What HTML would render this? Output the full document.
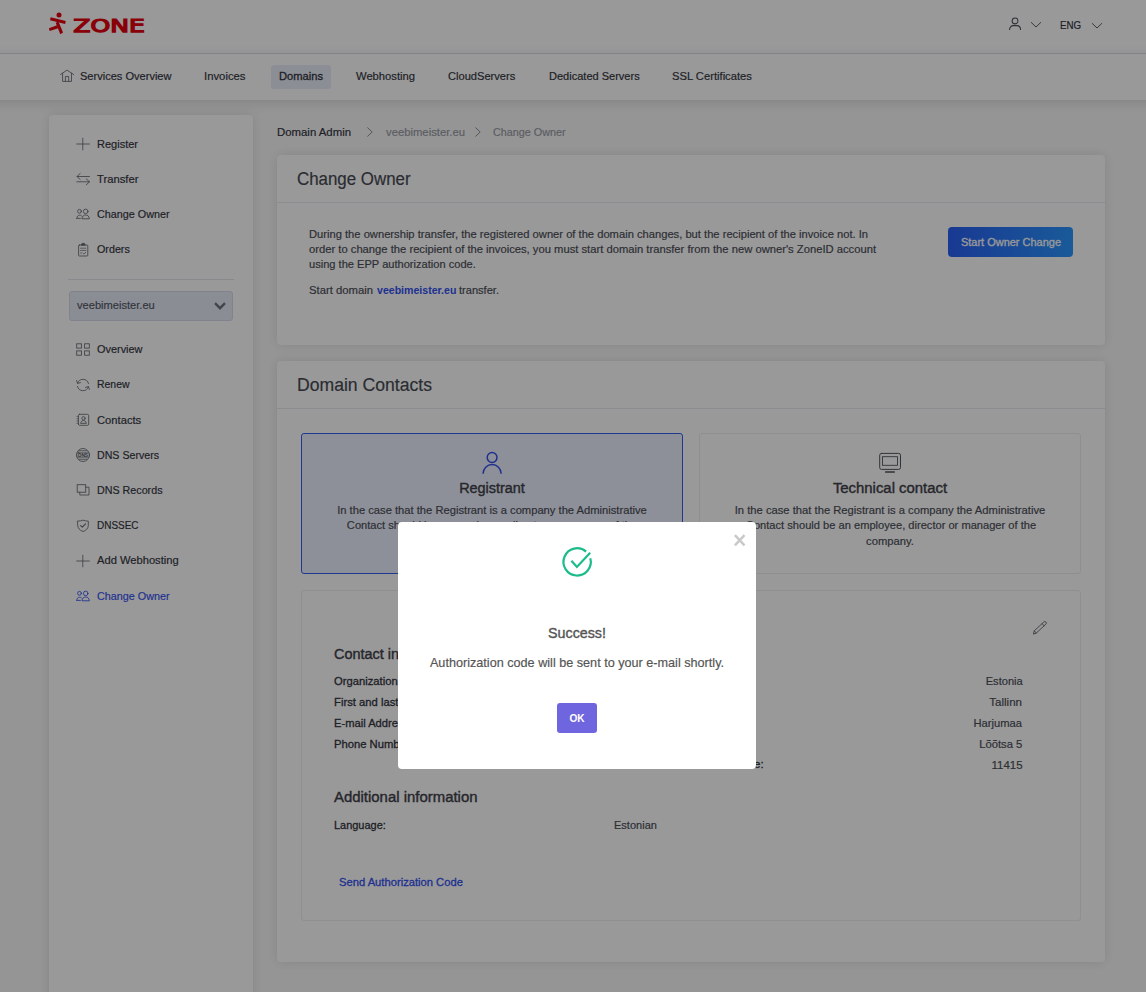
<!DOCTYPE html>
<html lang="en"><head><meta charset="utf-8"><title>Change Owner</title>
<style>
*{box-sizing:border-box;margin:0;padding:0}
html,body{width:1146px;height:992px;overflow:hidden}
body{font-family:"Liberation Sans",sans-serif;font-size:12px;color:#33363f;background:#f9f9fa;position:relative}
.abs{position:absolute}
.t{position:absolute;white-space:nowrap}
.t b{font-weight:700}
header{position:absolute;left:0;top:0;width:1146px;height:54px;background:#fff;border-bottom:1px solid #e2e4ea}
nav{position:absolute;left:-30px;top:54px;width:1206px;height:46px;background:#fff;box-shadow:0 3px 12px rgba(0,0,0,.12)}
.pill{position:absolute;left:271px;top:65px;width:60px;height:24px;background:#e9edf9;border-radius:3px}
.side{position:absolute;left:49px;top:115px;width:204px;height:900px;background:#fff;border-radius:4px;box-shadow:0 0 12px rgba(0,0,0,.11)}
.card{position:absolute;left:277px;width:828px;background:#fff;border-radius:4px;box-shadow:0 0 12px rgba(0,0,0,.11)}
.hr{position:absolute;left:277px;width:828px;height:1px;background:#e8eaef}
svg{position:absolute;overflow:visible}
.ic{fill:none;stroke:#666a73;stroke-width:.85;stroke-linecap:round;stroke-linejoin:round}
.overlay{position:absolute;left:0;top:0;width:1146px;height:992px;background:rgba(0,0,0,.4)}
.modal{position:absolute;left:398px;top:522px;width:358px;height:247px;background:#fff;border-radius:4px}
</style></head><body>

<header></header>
<nav></nav>
<div class="pill"></div>
<div class="side"></div>
<div class="card" style="top:155px;height:190px"></div>
<div class="hr" style="top:202px"></div>
<div class="card" style="top:361px;height:601px"></div>
<div class="hr" style="top:408px"></div>

<!-- logo -->
<svg style="left:0;top:0" width="160" height="54" viewBox="0 0 160 54">
 <g fill="#e4000f">
  <circle cx="59" cy="15.100" r="2.500"/>
  <path d="M50.700 17.200 L65.800 21 L65.100 24 L50 20.200 Z"/>
  <path d="M55.700 22.700 L58.500 21.600 L63 32.500 L60.300 34.200 Z"/>
  <path d="M57 25.300 L58.200 28.200 L49.700 31 L48.900 28.200 Z"/>
 </g>
 <text x="73.300" y="32.300" font-family="DejaVu Sans, Liberation Sans, sans-serif" font-size="17.4" fill="#e4000f" stroke="#e4000f" stroke-width="1.25" stroke-linejoin="miter" textLength="71.5" lengthAdjust="spacingAndGlyphs">ZONE</text>
</svg>

<!-- header right icons -->
<svg class="ic" style="left:1009px;top:18px;stroke:#50535c;stroke-width:1.050;stroke-linecap:butt" width="12" height="12" viewBox="0 0 12 12"><circle cx="6.050" cy="2.950" r="2.900"/><path d="M0.500 12.100C0.500 9.300 2.200 7.600 4.300 7.600H7.800C9.900 7.600 11.600 9.300 11.600 12.100"/></svg>
<svg class="ic" style="left:1031px;top:21px;stroke:#3f424a" width="10" height="6" viewBox="0 0 10 6"><path d="M0.300 1.500L5 6 9.700 1.500"/></svg>
<svg class="ic" style="left:1092px;top:22.200px;stroke:#3f424a" width="10" height="6" viewBox="0 0 10 6"><path d="M0.300 1.500L5 6 9.700 1.500"/></svg>

<!-- nav home icon -->
<svg class="ic" style="left:60px;top:69px" width="14" height="14" viewBox="0 0 14 14"><path d="M0.500 5.500L7.050 1.100 13.600 5.500"/><path d="M2.600 4.300V12.400H11.500V4.300"/><path d="M5.400 12.400V7.500H8.700V12.400"/></svg>

<!-- sidebar -->
<div class="abs" style="left:68px;top:279px;width:166px;height:1px;background:#e2e4ea"></div>
<div class="abs" style="left:69px;top:291px;width:164px;height:30px;background:#e8ecf8;border:1px solid #d5dae8;border-radius:3px"></div>
<svg style="left:214px;top:302px;fill:none;stroke:#70747f;stroke-width:2.4" width="12" height="8" viewBox="0 0 12 8"><path d="M1 1.200l5 5 5-5"/></svg>

<!-- plus -->
<svg class="ic" style="left:76px;top:137px" width="14" height="14" viewBox="0 0 14 14"><path d="M6.800 1.200v11.700M0.700 7h12.700"/></svg>
<!-- transfer -->
<svg class="ic" style="left:76px;top:172px" width="14" height="14" viewBox="0 0 14 14"><path d="M13.500 4.500H1M4.200 1.500L1 4.500l3.200 3"/><path d="M0.800 9.800h12.700M10.300 6.800l3.200 3-3.200 3"/></svg>
<!-- change owner -->
<svg class="ic" style="left:76px;top:208px" width="14" height="12" viewBox="0 0 14 12"><circle cx="3.500" cy="3.300" r="1.900"/><circle cx="9.700" cy="3.400" r="2.300"/><path d="M0.800 10.400c0.100-2 1.200-3.200 2.800-3.200 0.700 0 1.300 0.200 1.800 0.600M0.800 10.400h3.600M6 10.400c0.200-2.100 1.600-3.400 3.700-3.400s3.400 1.300 3.600 3.400z"/></svg>
<!-- orders -->
<svg class="ic" style="left:77px;top:242px" width="12" height="15" viewBox="0 0 12 15"><rect x="1.600" y="3" width="9.200" height="11" rx="0.800"/><path d="M4.300 2.900l0.700-1.500h2.400l0.700 1.500z" fill="#666a73"/><path d="M3.500 6.200h5.400M3.500 8.400h5.400M3.500 11h1.200M6 11.200l1 0.900 1.800-1.900" stroke-width="0.700"/></svg>
<!-- overview -->
<svg class="ic" style="left:76px;top:342px;stroke-linejoin:miter" width="14" height="14" viewBox="0 0 14 14"><rect x="0.700" y="1.800" width="4.700" height="4.300"/><rect x="8.600" y="1.800" width="4.700" height="4.300"/><rect x="0.700" y="8.900" width="4.700" height="4.300"/><rect x="8.600" y="8.900" width="4.700" height="4.300"/></svg>
<!-- renew -->
<svg class="ic" style="left:76px;top:378px" width="14" height="14" viewBox="0 0 14 14"><path d="M1.600 5.200A5.700 5.700 0 0 1 12.500 5.500"/><path d="M12.400 8.800A5.700 5.700 0 0 1 1.500 8.500"/><path d="M0.600 2.500l1 2.900 2.900-0.800"/><path d="M13.400 11.500l-1-2.900-2.900 0.800"/></svg>
<!-- contacts -->
<svg class="ic" style="left:76px;top:413px" width="14" height="14" viewBox="0 0 14 14"><rect x="2.400" y="1.300" width="10.300" height="11" rx="1.200"/><circle cx="7.500" cy="5.300" r="1.700"/><path d="M4.700 10c0.300-1.600 1.400-2.400 2.800-2.400s2.500 0.800 2.800 2.400z"/><path d="M1 3.400h1.400M1 5.700h1.400M1 8h1.400M1 10.300h1.400" stroke-width="0.700"/></svg>
<!-- dns servers -->
<svg class="ic" style="left:76px;top:448px" width="14" height="14" viewBox="0 0 14 14"><circle cx="7" cy="7" r="6.500"/><rect x="0.900" y="4.200" width="12.200" height="5.600" rx="1.800" fill="#fff" stroke-width="0.700"/><path d="M3.300 2.500h7.400M3.300 11.500h7.400" stroke-width="0.600"/><text x="1.900" y="8.900" textLength="10.200" lengthAdjust="spacingAndGlyphs" font-family="Liberation Sans, sans-serif" font-weight="bold" font-size="5.300" fill="#4a4d55" stroke="none">DNS</text></svg>
<!-- dns records -->
<svg class="ic" style="left:76px;top:483px;stroke-linejoin:miter" width="14" height="14" viewBox="0 0 14 14"><rect x="1.200" y="1.700" width="8.500" height="7.500"/><path d="M3.800 9.200v2.800h9.200V4.200H9.700"/></svg>
<!-- dnssec -->
<svg class="ic" style="left:77px;top:519px" width="12" height="14" viewBox="0 0 12 14"><path d="M0.700 2.100C2.500 2.100 4.500 1.800 6 1.100 7.500 1.800 9.500 2.100 11.300 2.100v4.200c0 3-2.100 5.100-5.300 6.200C2.800 11.400 0.700 9.300 0.700 6.300z"/><path d="M3.600 6.600l1.700 1.600 3.200-3.300" stroke-width="1.100"/></svg>
<!-- plus 2 -->
<svg class="ic" style="left:76px;top:554px" width="14" height="14" viewBox="0 0 14 14"><path d="M6.800 1.200v11.700M0.700 7h12.700"/></svg>
<!-- change owner blue -->
<svg class="ic" style="left:76px;top:590px;stroke:#3452f0" width="14" height="12" viewBox="0 0 14 12"><circle cx="3.500" cy="3.300" r="1.900"/><circle cx="9.700" cy="3.400" r="2.300"/><path d="M0.800 10.400c0.100-2 1.200-3.200 2.800-3.200 0.700 0 1.300 0.200 1.800 0.600M0.800 10.400h3.600M6 10.400c0.200-2.100 1.600-3.400 3.700-3.400s3.400 1.300 3.600 3.400z"/></svg>

<!-- breadcrumb chevrons -->
<svg class="ic" style="left:367px;top:127px;stroke:#7d8089" width="6" height="10" viewBox="0 0 6 10"><path d="M0.700 0.800L5.200 5 0.700 9.200"/></svg>
<svg class="ic" style="left:475px;top:127px;stroke:#7d8089" width="6" height="10" viewBox="0 0 6 10"><path d="M0.700 0.800L5.200 5 0.700 9.200"/></svg>

<!-- button -->
<div class="abs" style="left:948px;top:227px;width:125px;height:30px;border-radius:4px;background:linear-gradient(90deg,#2b60f5,#2a96ff)"></div>

<!-- contact boxes -->
<div class="abs" style="left:301px;top:433px;width:382px;height:141px;background:#ecf0fe;border:1px solid #3360ee;border-radius:3px"></div>
<div class="abs" style="left:699px;top:433px;width:382px;height:141px;background:#fff;border:1px solid #eceef2;border-radius:3px"></div>
<div class="abs" style="left:301px;top:590px;width:780px;height:331px;background:#fff;border:1px solid #eceef2;border-radius:3px"></div>
<!-- person icon -->
<svg style="left:482px;top:451px;fill:none;stroke:#3350ee;stroke-width:1.500" width="20" height="23" viewBox="0 0 20 23"><circle cx="10.100" cy="6.500" r="4.900"/><path d="M1.100 22.800v-0.200A9 9 0 0 1 19.100 22.600v0.200"/></svg>
<!-- monitor icon -->
<svg class="ic" style="left:879px;top:452px;stroke:#53565e;stroke-width:1" width="22" height="22" viewBox="0 0 22 22"><rect x="0.700" y="1.400" width="20.800" height="16" rx="1.800"/><rect x="3.500" y="4.700" width="15" height="8.600" stroke-width="0.9" stroke-linejoin="miter"/><rect x="6.100" y="19.200" width="9.700" height="1.600" fill="#5b5e67" stroke="none"/></svg>
<!-- pencil -->
<svg class="ic" style="left:1032.600px;top:620.600px;stroke:#62656e;stroke-width:0.9" width="14" height="14" viewBox="0 0 14 14"><path d="M0.500 12.700L1.300 9.800 10.800 1A1.500 1.500 0 0 1 12.900 3.200L3.300 12z"/><path d="M1.300 9.800l2 2.200M9.100 2.600l2 2.200"/></svg>

<div class="t" id="eng" style="top:18px;font-size:11px;line-height:15px;color:#33363f;-webkit-text-stroke:0.18px #33363f;left:1059.9px;transform-origin:0 50%;transform:scaleX(0.8891);">ENG</div>
<div class="t" id="n1" style="top:69px;font-size:11.3px;line-height:15px;color:#33363f;-webkit-text-stroke:0.18px #33363f;left:79.8px;transform-origin:0 50%;transform:scaleX(0.9781);">Services Overview</div>
<div class="t" id="n2" style="top:69px;font-size:11.3px;line-height:15px;color:#33363f;-webkit-text-stroke:0.18px #33363f;left:204.3px;transform-origin:0 50%;transform:scaleX(1.0011);">Invoices</div>
<div class="t" id="n3" style="top:69px;font-size:11.3px;line-height:15px;color:#33363f;-webkit-text-stroke:0.3px #33363f;left:279.4px;transform-origin:0 50%;transform:scaleX(0.9870);">Domains</div>
<div class="t" id="n4" style="top:69px;font-size:11.3px;line-height:15px;color:#33363f;-webkit-text-stroke:0.18px #33363f;left:356.0px;transform-origin:0 50%;transform:scaleX(0.9924);">Webhosting</div>
<div class="t" id="n5" style="top:69px;font-size:11.3px;line-height:15px;color:#33363f;-webkit-text-stroke:0.18px #33363f;left:448.0px;transform-origin:0 50%;transform:scaleX(0.9832);">CloudServers</div>
<div class="t" id="n6" style="top:69px;font-size:11.3px;line-height:15px;color:#33363f;-webkit-text-stroke:0.18px #33363f;left:548.5px;transform-origin:0 50%;transform:scaleX(0.9759);">Dedicated Servers</div>
<div class="t" id="n7" style="top:69px;font-size:11.3px;line-height:15px;color:#33363f;-webkit-text-stroke:0.18px #33363f;left:672.4px;transform-origin:0 50%;transform:scaleX(0.9916);">SSL Certificates</div>
<div class="t" id="s1" style="top:137px;font-size:11.3px;line-height:15px;color:#33363f;-webkit-text-stroke:0.18px #33363f;left:97.3px;transform-origin:0 50%;transform:scaleX(0.9744);">Register</div>
<div class="t" id="s2" style="top:172px;font-size:11.3px;line-height:15px;color:#33363f;-webkit-text-stroke:0.18px #33363f;left:97.3px;transform-origin:0 50%;transform:scaleX(0.9942);">Transfer</div>
<div class="t" id="s3" style="top:207px;font-size:11.3px;line-height:15px;color:#33363f;-webkit-text-stroke:0.18px #33363f;left:97.3px;transform-origin:0 50%;transform:scaleX(0.9541);">Change Owner</div>
<div class="t" id="s4" style="top:242px;font-size:11.3px;line-height:15px;color:#33363f;-webkit-text-stroke:0.18px #33363f;left:97.3px;transform-origin:0 50%;transform:scaleX(0.9499);">Orders</div>
<div class="t" id="sel" style="top:298px;font-size:11.3px;line-height:15px;color:#555a68;-webkit-text-stroke:0.18px #555a68;left:76.8px;transform-origin:0 50%;transform:scaleX(0.9833);">veebimeister.eu</div>
<div class="t" id="s5" style="top:342px;font-size:11.3px;line-height:15px;color:#33363f;-webkit-text-stroke:0.18px #33363f;left:97.3px;transform-origin:0 50%;transform:scaleX(0.9662);">Overview</div>
<div class="t" id="s6" style="top:377px;font-size:11.3px;line-height:15px;color:#33363f;-webkit-text-stroke:0.18px #33363f;left:97.3px;transform-origin:0 50%;transform:scaleX(0.9240);">Renew</div>
<div class="t" id="s7" style="top:413px;font-size:11.3px;line-height:15px;color:#33363f;-webkit-text-stroke:0.18px #33363f;left:97.3px;transform-origin:0 50%;transform:scaleX(0.9912);">Contacts</div>
<div class="t" id="s8" style="top:448px;font-size:11.3px;line-height:15px;color:#33363f;-webkit-text-stroke:0.18px #33363f;left:97.3px;transform-origin:0 50%;transform:scaleX(0.9405);">DNS Servers</div>
<div class="t" id="s9" style="top:483px;font-size:11.3px;line-height:15px;color:#33363f;-webkit-text-stroke:0.18px #33363f;left:97.3px;transform-origin:0 50%;transform:scaleX(0.9484);">DNS Records</div>
<div class="t" id="s10" style="top:518px;font-size:11.3px;line-height:15px;color:#33363f;-webkit-text-stroke:0.18px #33363f;left:97.3px;transform-origin:0 50%;transform:scaleX(0.8812);">DNSSEC</div>
<div class="t" id="s11" style="top:553px;font-size:11.3px;line-height:15px;color:#33363f;-webkit-text-stroke:0.18px #33363f;left:97.3px;transform-origin:0 50%;transform:scaleX(0.9879);">Add Webhosting</div>
<div class="t" id="s12" style="top:589px;font-size:11.3px;line-height:15px;color:#3452f0;-webkit-text-stroke:0.18px #3452f0;left:97.3px;transform-origin:0 50%;transform:scaleX(0.9541);">Change Owner</div>
<div class="t" id="b1" style="top:125px;font-size:11.3px;line-height:15px;color:#33363f;-webkit-text-stroke:0.18px #33363f;left:276.8px;transform-origin:0 50%;transform:scaleX(1.0072);">Domain Admin</div>
<div class="t" id="b2" style="top:125px;font-size:11.3px;line-height:15px;color:#989ba5;-webkit-text-stroke:0.18px #989ba5;left:386.3px;transform-origin:0 50%;transform:scaleX(0.9984);">veebimeister.eu</div>
<div class="t" id="b3" style="top:125px;font-size:11.3px;line-height:15px;color:#989ba5;-webkit-text-stroke:0.18px #989ba5;left:493.3px;transform-origin:0 50%;transform:scaleX(0.9541);">Change Owner</div>
<div class="t" id="h1" style="top:168px;font-size:18px;line-height:22px;color:#474a53;-webkit-text-stroke:0.18px #474a53;left:297.2px;transform-origin:0 50%;transform:scaleX(0.9382);">Change Owner</div>
<div class="t" id="p1" style="top:227px;font-size:11.3px;line-height:15px;color:#4b4e57;-webkit-text-stroke:0.18px #4b4e57;left:308.8px;transform-origin:0 50%;transform:scaleX(0.9891);">During the ownership transfer, the registered owner of the domain changes, but the recipient of the invoice not. In</div>
<div class="t" id="p2" style="top:242px;font-size:11.3px;line-height:15px;color:#4b4e57;-webkit-text-stroke:0.18px #4b4e57;left:308.8px;transform-origin:0 50%;transform:scaleX(0.9929);">order to change the recipient of the invoices, you must start domain transfer from the new owner's ZoneID account</div>
<div class="t" id="p3" style="top:257px;font-size:11.3px;line-height:15px;color:#4b4e57;-webkit-text-stroke:0.18px #4b4e57;left:308.8px;transform-origin:0 50%;transform:scaleX(0.9812);">using the EPP authorization code.</div>
<div class="t" id="p4a" style="top:283px;font-size:11.3px;line-height:15px;color:#4b4e57;-webkit-text-stroke:0.18px #4b4e57;left:308.8px;transform-origin:0 50%;transform:scaleX(0.9990);">Start domain</div>
<div class="t" id="p4b" style="top:283px;font-size:11.3px;line-height:15px;color:#3452f0;font-weight:700;left:376.6px;transform-origin:0 50%;transform:scaleX(0.9365);">veebimeister.eu</div>
<div class="t" id="p4c" style="top:283px;font-size:11.3px;line-height:15px;color:#4b4e57;-webkit-text-stroke:0.18px #4b4e57;left:459.3px;transform-origin:0 50%;transform:scaleX(0.9797);">transfer.</div>
<div class="t" id="btnw" style="top:235px;font-size:11.3px;line-height:15px;color:#fff;-webkit-text-stroke:0.3px #fff;left:710.5px;width:600px;text-align:center;transform-origin:50% 50%;transform:scaleX(0.9710);"><span id="btn">Start Owner Change</span></div>
<div class="t" id="h2" style="top:374px;font-size:18px;line-height:22px;color:#474a53;-webkit-text-stroke:0.18px #474a53;left:297.2px;transform-origin:0 50%;transform:scaleX(0.9778);">Domain Contacts</div>
<div class="t" id="r0w" style="top:479px;font-size:14px;line-height:18px;color:#3f424a;-webkit-text-stroke:0.38px #3f424a;left:192.2px;width:600px;text-align:center;transform-origin:50% 50%;transform:scaleX(1.0296);"><span id="r0">Registrant</span></div>
<div class="t" id="r1w" style="top:503px;font-size:11.3px;line-height:15px;color:#4b4e57;-webkit-text-stroke:0.18px #4b4e57;left:191.8px;width:600px;text-align:center;transform-origin:50% 50%;transform:scaleX(0.9903);"><span id="r1">In the case that the Registrant is a company the Administrative</span></div>
<div class="t" id="r2w" style="top:518px;font-size:11.3px;line-height:15px;color:#4b4e57;-webkit-text-stroke:0.18px #4b4e57;left:192.2px;width:600px;text-align:center;transform-origin:50% 50%;transform:scaleX(0.9835);"><span id="r2">Contact should be an employee, director or manager of the</span></div>
<div class="t" id="r3w" style="top:534px;font-size:11.3px;line-height:15px;color:#4b4e57;-webkit-text-stroke:0.18px #4b4e57;left:191.8px;width:600px;text-align:center;transform-origin:50% 50%;transform:scaleX(0.9929);"><span id="r3">company.</span></div>
<div class="t" id="t0w" style="top:479px;font-size:14px;line-height:18px;color:#3f424a;-webkit-text-stroke:0.38px #3f424a;left:590.1px;width:600px;text-align:center;transform-origin:50% 50%;transform:scaleX(1.0633);"><span id="t0">Technical contact</span></div>
<div class="t" id="t1w" style="top:503px;font-size:11.3px;line-height:15px;color:#4b4e57;-webkit-text-stroke:0.18px #4b4e57;left:590.0px;width:600px;text-align:center;transform-origin:50% 50%;transform:scaleX(0.9932);"><span id="t1">In the case that the Registrant is a company the Administrative</span></div>
<div class="t" id="t2w" style="top:518px;font-size:11.3px;line-height:15px;color:#4b4e57;-webkit-text-stroke:0.18px #4b4e57;left:590.6px;width:600px;text-align:center;transform-origin:50% 50%;transform:scaleX(0.9835);"><span id="t2">Contact should be an employee, director or manager of the</span></div>
<div class="t" id="t3w" style="top:534px;font-size:11.3px;line-height:15px;color:#4b4e57;-webkit-text-stroke:0.18px #4b4e57;left:589.5px;width:600px;text-align:center;transform-origin:50% 50%;transform:scaleX(0.9929);"><span id="t3">company.</span></div>
<div class="t" id="c0" style="top:645px;font-size:14px;line-height:18px;color:#3f424a;-webkit-text-stroke:0.38px #3f424a;left:334.4px;transform-origin:0 50%;transform:scaleX(1.0326);">Contact information</div>
<div class="t" id="c1" style="top:674px;font-size:11.3px;line-height:15px;color:#33363f;-webkit-text-stroke:0.3px #33363f;left:334.4px;transform-origin:0 50%;transform:scaleX(0.9943);">Organization:</div>
<div class="t" id="c2" style="top:695px;font-size:11.3px;line-height:15px;color:#33363f;-webkit-text-stroke:0.3px #33363f;left:334.4px;transform-origin:0 50%;transform:scaleX(0.9973);">First and last name:</div>
<div class="t" id="c3" style="top:716px;font-size:11.3px;line-height:15px;color:#33363f;-webkit-text-stroke:0.3px #33363f;left:334.4px;transform-origin:0 50%;transform:scaleX(0.9896);">E-mail Address:</div>
<div class="t" id="c4" style="top:737px;font-size:11.3px;line-height:15px;color:#33363f;-webkit-text-stroke:0.3px #33363f;left:334.4px;transform-origin:0 50%;transform:scaleX(0.9946);">Phone Number:</div>
<div class="t" id="d1" style="top:674px;font-size:11.3px;line-height:15px;color:#33363f;-webkit-text-stroke:0.3px #33363f;left:697.9px;transform-origin:0 50%;transform:scaleX(1.0304);">Country:</div>
<div class="t" id="d2" style="top:695px;font-size:11.3px;line-height:15px;color:#33363f;-webkit-text-stroke:0.3px #33363f;left:697.9px;transform-origin:0 50%;transform:scaleX(1.0615);">City:</div>
<div class="t" id="d3" style="top:716px;font-size:11.3px;line-height:15px;color:#33363f;-webkit-text-stroke:0.3px #33363f;left:697.9px;transform-origin:0 50%;transform:scaleX(1.0016);">County:</div>
<div class="t" id="d4" style="top:737px;font-size:11.3px;line-height:15px;color:#33363f;-webkit-text-stroke:0.3px #33363f;left:697.9px;transform-origin:0 50%;transform:scaleX(1.0315);">Address:</div>
<div class="t" id="d5" style="top:757px;font-size:11.3px;line-height:15px;color:#33363f;-webkit-text-stroke:0.3px #33363f;right:382.4px;transform-origin:100% 50%;transform:scaleX(1.0203);">Postal Code:</div>
<div class="t" id="v1" style="top:674px;font-size:11.3px;line-height:15px;color:#4b4e57;-webkit-text-stroke:0.18px #4b4e57;right:123.6px;transform-origin:100% 50%;transform:scaleX(0.9818);">Estonia</div>
<div class="t" id="v2" style="top:695px;font-size:11.3px;line-height:15px;color:#4b4e57;-webkit-text-stroke:0.18px #4b4e57;right:123.6px;transform-origin:100% 50%;transform:scaleX(1.0240);">Tallinn</div>
<div class="t" id="v3" style="top:716px;font-size:11.3px;line-height:15px;color:#4b4e57;-webkit-text-stroke:0.18px #4b4e57;right:123.6px;transform-origin:100% 50%;transform:scaleX(0.9901);">Harjumaa</div>
<div class="t" id="v4" style="top:737px;font-size:11.3px;line-height:15px;color:#4b4e57;-webkit-text-stroke:0.18px #4b4e57;right:123.6px;transform-origin:100% 50%;transform:scaleX(0.9967);">Lõõtsa 5</div>
<div class="t" id="v5" style="top:758px;font-size:11.3px;line-height:15px;color:#4b4e57;-webkit-text-stroke:0.18px #4b4e57;right:123.6px;transform-origin:100% 50%;transform:scaleX(1.0138);">11415</div>
<div class="t" id="a0" style="top:788px;font-size:14px;line-height:18px;color:#3f424a;-webkit-text-stroke:0.38px #3f424a;left:334.4px;transform-origin:0 50%;transform:scaleX(1.0658);">Additional information</div>
<div class="t" id="a1" style="top:818px;font-size:11.3px;line-height:15px;color:#33363f;-webkit-text-stroke:0.3px #33363f;left:334.4px;transform-origin:0 50%;transform:scaleX(0.9699);">Language:</div>
<div class="t" id="a2" style="top:818px;font-size:11.3px;line-height:15px;color:#4b4e57;-webkit-text-stroke:0.18px #4b4e57;left:614.2px;transform-origin:0 50%;transform:scaleX(0.9757);">Estonian</div>
<div class="t" id="a3" style="top:875px;font-size:11.3px;line-height:15px;color:#3452f0;-webkit-text-stroke:0.3px #3452f0;left:339.0px;transform-origin:0 50%;transform:scaleX(0.9913);">Send Authorization Code</div>

<div class="overlay"></div>
<div class="modal"></div>
<!-- modal content -->
<svg style="left:561px;top:546px;fill:none;stroke:#1bbc8a;stroke-width:2.200;stroke-linejoin:miter" width="32" height="32" viewBox="0 0 32 32"><path d="M29.300 12.300A13.650 13.650 0 1 1 25.100 5.600"/><path d="M10.400 14.700L15.900 20.900 29.200 6.800"/></svg>
<svg style="left:734px;top:534px;fill:none;stroke:#c9c9c9;stroke-width:2.45" width="12" height="12" viewBox="0 0 12 12"><path d="M0.900 1.100L10.500 11.300M10.500 1.100L0.900 11.300"/></svg>
<div class="abs" style="left:557px;top:703px;width:40px;height:30px;background:#6f65de;border-radius:3px"></div>
<div class="t" id="m1w" style="top:623px;font-size:15px;line-height:19px;color:#555;-webkit-text-stroke:0.38px #555;left:277.2px;width:600px;text-align:center;transform-origin:50% 50%;transform:scaleX(0.9530);"><span id="m1">Success!</span></div>
<div class="t" id="m2w" style="top:654px;font-size:13px;line-height:17px;color:#555;-webkit-text-stroke:0.18px #555;left:276.9px;width:600px;text-align:center;transform-origin:50% 50%;transform:scaleX(0.9722);"><span id="m2">Authorization code will be sent to your e-mail shortly.</span></div>
<div class="t" id="m3w" style="top:711px;font-size:11.3px;line-height:15px;color:#fff;font-weight:700;left:277.0px;width:600px;text-align:center;transform-origin:50% 50%;transform:scaleX(0.8966);"><span id="m3">OK</span></div>
</body></html>
